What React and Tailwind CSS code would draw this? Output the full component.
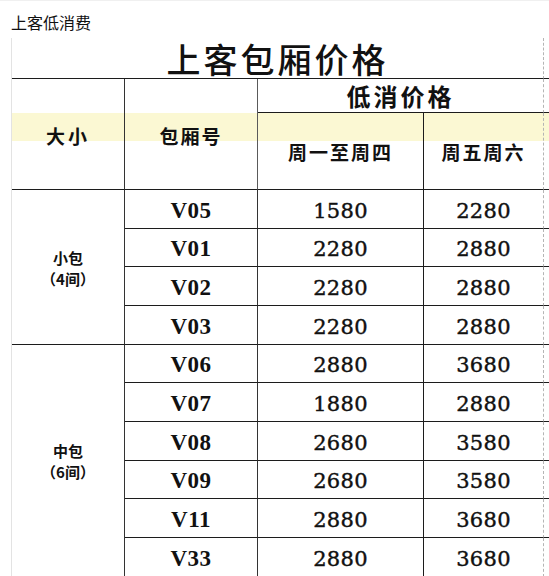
const CJK = "font-['Noto_Sans_CJK_SC',sans-serif]";
const CODE = "font-['Liberation_Serif','Noto_Sans_CJK_SC',serif]";
const NUM = "font-['DejaVu_Serif','Liberation_Serif',serif]";

const LINE = "border-b border-[#1c1c1c]";
const DASH = "border-r border-r-[#b5b5b5] [border-right-style:dashed]";

const GROUPS = [
  {
    name: "小包",
    count: "（4间）",
    span: "row-span-4",
    rows: [
      ["V05", "1580", "2280"],
      ["V01", "2280", "2880"],
      ["V02", "2280", "2880"],
      ["V03", "2280", "2880"],
    ],
  },
  {
    name: "中包",
    count: "（6间）",
    span: "row-span-6",
    rows: [
      ["V06", "2880", "3680"],
      ["V07", "1880", "2880"],
      ["V08", "2680", "3580"],
      ["V09", "2680", "3580"],
      ["V11", "2880", "3680"],
      ["V33", "2880", "3680"],
    ],
  },
];

function Cell({ className = "", children }) {
  return <div className={`flex items-center justify-center ${LINE} ${className}`}>{children}</div>;
}

export default function App() {
  return (
    <div className="w-[549px] h-[576px] overflow-hidden bg-white text-[#111] border-t border-[#f0f0f0]">
      <p className={`pl-[11px] pt-[11px] h-[37px] text-[16px] leading-[20px] ${CJK}`}>上客低消费</p>

      <div className="ml-[11px] border-l border-[#e3e3e3]">
        <div className="grid grid-cols-[113px_133px_166px_120px_5px] grid-rows-[41px_34px_28px_49px_repeat(10,38.67px)]">
          {/* highlighted spreadsheet row */}
          <div className="col-start-1 col-end-6 row-start-3 bg-[#fbf8d3]" />

          <div className={`col-start-1 col-span-4 row-start-1 flex items-end justify-center ${LINE} ${DASH}`}>
            <span className={`text-[34px] leading-[38px] font-medium tracking-[3px] ${CJK}`}>上客包厢价格</span>
          </div>
          <div className={`col-start-5 row-start-1 ${LINE}`} />

          <Cell className="col-start-1 row-start-2 row-span-3 pt-[5px] border-r border-r-[#333]">
            <span className={`text-[19px] font-bold tracking-[3px] ${CJK}`}>大小</span>
          </Cell>
          <Cell className="col-start-2 row-start-2 row-span-3 pt-[5px] border-r-[1.5px] border-r-[#5a5a5a]">
            <span className={`text-[19px] font-bold tracking-[2px] ${CJK}`}>包厢号</span>
          </Cell>
          <Cell className={`col-start-3 col-span-2 row-start-2 ${DASH}`}>
            <span className={`text-[24px] font-bold tracking-[3px] ${CJK}`}>低消价格</span>
          </Cell>
          <div className={`col-start-5 row-start-2 ${LINE}`} />
          <Cell className="col-start-3 row-start-3 row-span-2 pt-[2px] border-r border-r-[#1c1c1c]">
            <span className={`text-[19px] font-bold tracking-[2px] ${CJK}`}>周一至周四</span>
          </Cell>
          <Cell className={`col-start-4 row-start-3 row-span-2 pt-[2px] ${DASH}`}>
            <span className={`text-[19px] font-bold tracking-[2px] ${CJK}`}>周五周六</span>
          </Cell>
          <div className={`col-start-5 row-start-3 row-span-2 ${LINE}`} />

          {GROUPS.map((g) =>
            [
              <Cell key={g.name} className={`${g.span} flex-col pt-[3px] border-r border-r-[#333]`}>
                <span className={`text-[15px] leading-[22px] font-bold ${CJK}`}>{g.name}</span>
                <span className={`text-[15px] leading-[22px] -mt-[1px] font-bold ${CJK}`}>{g.count}</span>
              </Cell>,
            ].concat(
              g.rows.flatMap(([code, weekday, weekend]) => [
                <Cell key={code} className="pt-[4px] border-r-[1.5px] border-r-[#333]">
                  <span className={`text-[23px] leading-[26px] font-bold tracking-[0.5px] ${CODE}`}>{code}</span>
                </Cell>,
                <Cell key={code + "a"} className="pt-[4px] border-r border-r-[#1c1c1c]">
                  <span className={`text-[21px] leading-[26px] tracking-[0.3px] [-webkit-text-stroke:0.4px_#111] ${NUM}`}>{weekday}</span>
                </Cell>,
                <Cell key={code + "b"} className={`pt-[4px] ${DASH}`}>
                  <span className={`text-[21px] leading-[26px] tracking-[0.3px] [-webkit-text-stroke:0.4px_#111] ${NUM}`}>{weekend}</span>
                </Cell>,
                <div key={code + "c"} className={LINE} />,
              ])
            )
          )}
        </div>
      </div>
    </div>
  );
}
